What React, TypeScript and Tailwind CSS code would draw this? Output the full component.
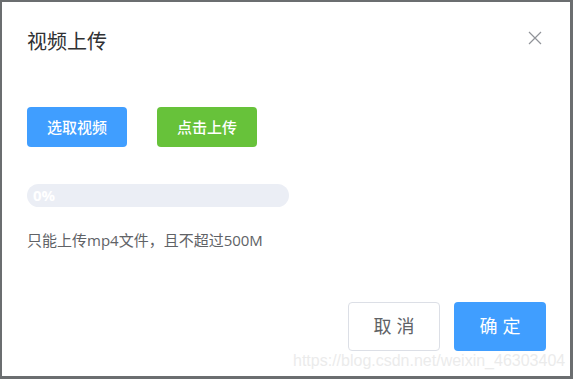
export default function App() {
  return (
    <div className="w-[573px] h-[379px] bg-[#6b6e70] pt-[2px] pl-[2px] pr-[3px] pb-[3px] font-['Open_Sans','Noto_Sans_CJK_SC',sans-serif]">
      <div className="relative h-full bg-white flex flex-col px-[25px]">
        {/* header */}
        <div className="flex items-start justify-between pt-[28px]">
          <h2 className="text-[20px] leading-[24px] text-[#303133]">视频上传</h2>
          <button className="mt-[1px] mr-[3px] text-[#909399]">
            <svg width="14" height="14" viewBox="0 0 14 14" fill="none" stroke="currentColor" strokeWidth="1.2">
              <path d="M1 1L13 13M13 1L1 13" />
            </svg>
          </button>
        </div>

        {/* actions */}
        <div className="flex gap-[30px] mt-[53px]">
          <button className="w-[100px] h-[40px] rounded-[4px] bg-[#409eff] text-white text-[15px] font-medium">选取视频</button>
          <button className="w-[100px] h-[40px] rounded-[4px] bg-[#67c23a] text-white text-[15px] font-medium">点击上传</button>
        </div>

        {/* progress */}
        <div className="mt-[37px] w-[262px] h-[23px] rounded-full bg-[#ebeef5] flex items-center px-[6px]">
          <span className="text-white text-[15px] font-bold">0%</span>
        </div>

        <p className="mt-[23px] text-[15px] leading-[20px] text-[#606266]">只能上传mp4文件，且不超过500M</p>

        {/* footer */}
        <div className="mt-auto mb-[25px] flex justify-end gap-[14px] -mr-[1px]">
          <button className="w-[92px] h-[49px] rounded-[4px] border border-[#dcdfe6] bg-white text-[#606266] text-[18px] tracking-[5px] pl-[5px]">取消</button>
          <button className="w-[92px] h-[49px] rounded-[4px] bg-[#409eff] text-white text-[18px] tracking-[5px] pl-[5px]">确定</button>
        </div>

        <span className="absolute left-[291px] top-[347px] text-[16px] text-[#e6e6e6]/80 font-['Liberation_Sans',sans-serif] pointer-events-none">
          https://blog.csdn.net/weixin_46303404
        </span>
      </div>
    </div>
  );
}
